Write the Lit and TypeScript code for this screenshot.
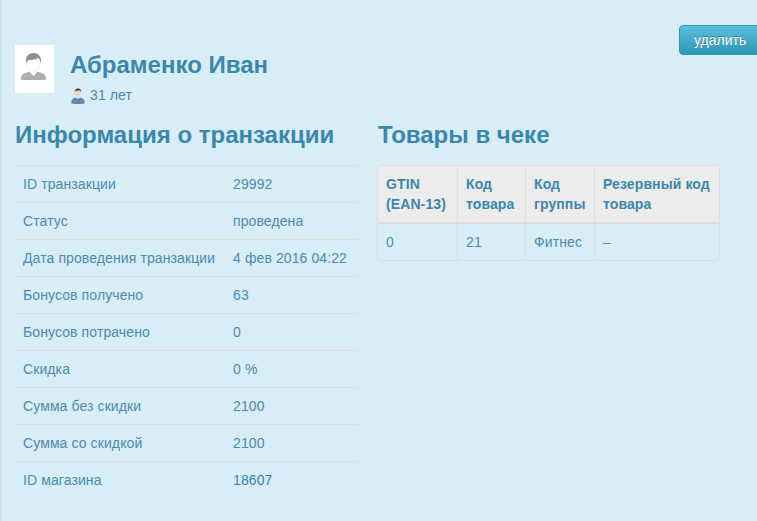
import { LitElement, html, css, svg } from "lit";
import { customElement } from "lit/decorators.js";

const INFO: [string, string, boolean?][] = [
  ["ID транзакции", "29992"],
  ["Статус", "проведена"],
  ["Дата проведения транзакции", "4 фев 2016 04:22"],
  ["Бонусов получено", "63"],
  ["Бонусов потрачено", "0"],
  ["Скидка", "0 %"],
  ["Сумма без скидки", "2100"],
  ["Сумма со скидкой", "2100"],
  ["ID магазина", "18607", true],
];

const avatar = svg`<svg class="avatar-icon" viewBox="0 0 39 48" width="39" height="48">
  <path d="M6 35c0-4.500 1.500-6 5-7.200l3.500-1.300 4 4.500 4-4.500 3.500 1.300c3.500 1.200 5 2.700 5 7.200z" fill="#b0b0b3"/>
  <path d="M14 26l4.500 5 4.500-5-1-2h-7z" fill="#fff"/>
  <ellipse cx="18.500" cy="17.500" rx="7" ry="8.500" fill="#fff" stroke="#e4e4e6" stroke-width=".6"/>
  <path d="M11 18.500c-.9-6.500 2.500-10.500 7.500-10.500s8.400 4 7.500 10.500c-.7-2.700-1.700-4.500-3-5.400-2.200 1.700-6.500 2.200-8.800 1.700-1.600.7-2.600 2-3.200 3.700z" fill="#8f8f93"/>
</svg>`;

const person = svg`<svg viewBox="0 0 14 16" width="14" height="16">
  <path d="M0.500 15.500c-.5-3.500 1-5 3.500-5.700l3-.6 3 .6c2.500.7 4 2.200 3.500 5.700-3 .7-10 .7-13 0z" fill="#5f8cab"/>
  <path d="M5 9.500l2 1.500 2-1.500-.5-1.500h-3z" fill="#e8eef0"/>
  <ellipse cx="7" cy="4.800" rx="3" ry="3.900" fill="#f2d7c4"/>
  <path d="M3.800 4.500C3.500 1.800 5 .5 7 .5s3.500 1.300 3.200 4c-.4-1.200-.9-1.900-1.400-2.200-1.200.5-2.700.5-3.700.3-.7.400-1 1-1.300 1.900z" fill="#3e3430"/>
</svg>`;

@customElement("app-root")
export class AppRoot extends LitElement {
  static styles = css`
    :host {
      display: block;
      font-family: "Liberation Sans", Arial, sans-serif;
      font-size: 14px;
      line-height: 20px;
      color: #3a87ad;
    }
    .page {
      box-sizing: border-box;
      width: 757px;
      height: 521px;
      overflow: hidden;
      background: #d9edf7;
      border-left: 1px solid #bce8f1;
      padding: 25px 0 0 14px;
    }
    .head {
      display: flex;
      justify-content: space-between;
      align-items: flex-start;
      height: 80px;
    }
    .profile {
      display: flex;
      gap: 16px;
      margin-top: 20px;
    }
    .avatar {
      width: 39px;
      height: 48px;
      background: #fff;
      display: block;
    }
    .avatar-icon { display: block; }
    .name {
      margin: 0;
      font-size: 24px;
      line-height: 40px;
      font-weight: bold;
      white-space: nowrap;
    }
    .age {
      display: flex;
      align-items: center;
      gap: 5px;
      margin: 0 0 0 1px;
      height: 20px;
      letter-spacing: 0.1px;
      color: #4a8bb0;
    }
    .age svg { display: block; margin-top: 2px; }
    .btn {
      box-sizing: border-box;
      width: 82px;
      height: 30px;
      margin-right: -4px;
      padding: 0 0 0 14px;
      text-align: left;
      font: 14px/20px "Liberation Sans", Arial, sans-serif;
      color: #fff;
      text-shadow: 0 -1px 0 rgba(0, 0, 0, 0.25);
      background: linear-gradient(to bottom, #5bc0de, #2f96b4);
      border: 1px solid #2f96b4;
      border-radius: 4px;
    }
    .cols {
      display: grid;
      grid-template-columns: 343px 343px;
      gap: 19px;
    }
    h2 {
      margin: 0;
      font-size: 24px;
      line-height: 40px;
      font-weight: bold;
      white-space: nowrap;
    }
    .col-title { margin: 10px 0; height: 40px; }
    .col-title.shift { padding-left: 1px; }
    .info {
      width: 343px;
      border-collapse: collapse;
      table-layout: fixed;
      letter-spacing: 0.1px;
      color: #4a8bb0;
    }
    .info td {
      padding: 8px;
      height: 20px;
      border-top: 1px solid #dddddd;
      white-space: nowrap;
      overflow: visible;
    }
    .info td:first-child { width: 194px; }
    .link { color: #2d81c0; }
    .goods {
      width: 343px;
      box-sizing: border-box;
      border: 1px solid #dddddd;
      border-radius: 4px;
      border-collapse: separate;
      border-spacing: 0;
      table-layout: fixed;
      letter-spacing: 0.1px;
    }
    .goods th, .goods td {
      box-sizing: border-box;
      padding: 8px;
      text-align: left;
      vertical-align: top;
      border-left: 1px solid #dddddd;
    }
    .goods th {
      font-weight: bold;
      background: #ececec;
      border-bottom: 2px solid #dddddd;
    }
    .goods td { height: 36px; color: #4a8bb0; }
    .goods th:first-child, .goods td:first-child { border-left: 0; }
    .goods th:first-child { border-top-left-radius: 3px; }
    .goods th:last-child { border-top-right-radius: 3px; }
    .c1 { width: 79px; }
    .c2 { width: 68px; }
    .c3 { width: 69px; }
  `;

  render() {
    return html`
      <div class="page">
        <div class="head">
          <div class="profile">
            <div class="avatar">${avatar}</div>
            <div>
              <h1 class="name">Абраменко Иван</h1>
              <p class="age">${person}<span>31 лет</span></p>
            </div>
          </div>
          <button class="btn">удалить</button>
        </div>
        <div class="cols">
          <section>
            <h2 class="col-title">Информация о транзакции</h2>
            <table class="info">
              ${INFO.map(
                ([k, v, link]) => html`<tr>
                  <td>${k}</td>
                  <td class=${link ? "link" : ""}>${v}</td>
                </tr>`
              )}
            </table>
          </section>
          <section>
            <h2 class="col-title shift">Товары в чеке</h2>
            <table class="goods">
              <thead>
                <tr>
                  <th class="c1">GTIN (EAN-13)</th>
                  <th class="c2">Код товара</th>
                  <th class="c3">Код группы</th>
                  <th>Резервный код товара</th>
                </tr>
              </thead>
              <tbody>
                <tr>
                  <td>0</td>
                  <td>21</td>
                  <td>Фитнес</td>
                  <td>–</td>
                </tr>
              </tbody>
            </table>
          </section>
        </div>
      </div>
    `;
  }
}
